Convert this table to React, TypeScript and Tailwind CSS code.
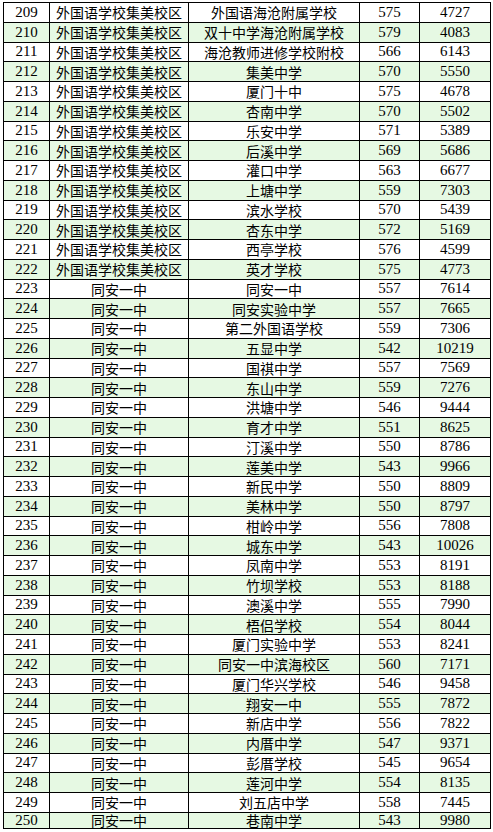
import React from "react";

const rows: [number, string, string, number, number][] = [
  [209, "外国语学校集美校区", "外国语海沧附属学校", 575, 4727],
  [210, "外国语学校集美校区", "双十中学海沧附属学校", 579, 4083],
  [211, "外国语学校集美校区", "海沧教师进修学校附校", 566, 6143],
  [212, "外国语学校集美校区", "集美中学", 570, 5550],
  [213, "外国语学校集美校区", "厦门十中", 575, 4678],
  [214, "外国语学校集美校区", "杏南中学", 570, 5502],
  [215, "外国语学校集美校区", "乐安中学", 571, 5389],
  [216, "外国语学校集美校区", "后溪中学", 569, 5686],
  [217, "外国语学校集美校区", "灌口中学", 563, 6677],
  [218, "外国语学校集美校区", "上塘中学", 559, 7303],
  [219, "外国语学校集美校区", "滨水学校", 570, 5439],
  [220, "外国语学校集美校区", "杏东中学", 572, 5169],
  [221, "外国语学校集美校区", "西亭学校", 576, 4599],
  [222, "外国语学校集美校区", "英才学校", 575, 4773],
  [223, "同安一中", "同安一中", 557, 7614],
  [224, "同安一中", "同安实验中学", 557, 7665],
  [225, "同安一中", "第二外国语学校", 559, 7306],
  [226, "同安一中", "五显中学", 542, 10219],
  [227, "同安一中", "国祺中学", 557, 7569],
  [228, "同安一中", "东山中学", 559, 7276],
  [229, "同安一中", "洪塘中学", 546, 9444],
  [230, "同安一中", "育才中学", 551, 8625],
  [231, "同安一中", "汀溪中学", 550, 8786],
  [232, "同安一中", "莲美中学", 543, 9966],
  [233, "同安一中", "新民中学", 550, 8809],
  [234, "同安一中", "美林中学", 550, 8797],
  [235, "同安一中", "柑岭中学", 556, 7808],
  [236, "同安一中", "城东中学", 543, 10026],
  [237, "同安一中", "凤南中学", 553, 8191],
  [238, "同安一中", "竹坝学校", 553, 8188],
  [239, "同安一中", "澳溪中学", 555, 7990],
  [240, "同安一中", "梧侣学校", 554, 8044],
  [241, "同安一中", "厦门实验中学", 553, 8241],
  [242, "同安一中", "同安一中滨海校区", 560, 7171],
  [243, "同安一中", "厦门华兴学校", 546, 9458],
  [244, "同安一中", "翔安一中", 555, 7872],
  [245, "同安一中", "新店中学", 556, 7822],
  [246, "同安一中", "内厝中学", 547, 9371],
  [247, "同安一中", "彭厝学校", 545, 9654],
  [248, "同安一中", "莲河中学", 554, 8135],
  [249, "同安一中", "刘五店中学", 558, 7445],
  [250, "同安一中", "巷南中学", 543, 9980],
];

const cjk = "font-['Noto_Sans_CJK_SC',sans-serif] text-[14px] leading-none";
const num = "font-['Liberation_Serif',serif] text-[15px] leading-none";

export default function App() {
  return (
    <div className="w-[493px] h-[832px] bg-white overflow-hidden">
      <div className="ml-[3px] mt-[2px] w-fit border-l border-t border-black grid grid-cols-[46px_139px_171px_60px_71px] text-black">
        {rows.map(([id, a, b, c, d], i) => {
          const bg = id % 2 === 0 ? "bg-[#e6f9e3]" : "bg-white";
          const h = i === rows.length - 1 ? "h-[16.25px]" : "h-[19.75px]";
          const cell = `${bg} ${h} border-r border-b border-black flex items-center justify-center whitespace-nowrap`;
          return (
            <React.Fragment key={id}>
              <div className={`${cell} ${num}`}>{id}</div>
              <div className={`${cell} ${cjk}`}>{a}</div>
              <div className={`${cell} ${cjk}`}>{b}</div>
              <div className={`${cell} ${num}`}>{c}</div>
              <div className={`${cell} ${num}`}>{d}</div>
            </React.Fragment>
          );
        })}
      </div>
    </div>
  );
}
